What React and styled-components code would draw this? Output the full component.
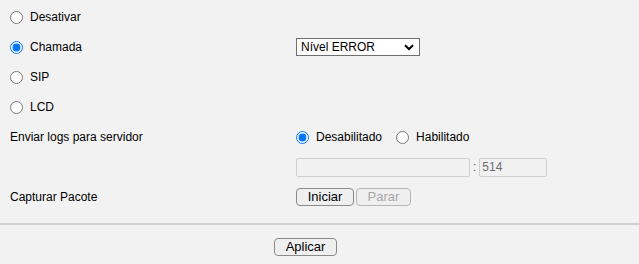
import React from "react";
import styled, { createGlobalStyle } from "styled-components";

const Global = createGlobalStyle`
  html, body { margin: 0; padding: 0; background: #f2f2f2; }
  body { font-family: "Liberation Sans", Arial, sans-serif; font-size: 12px; color: #000; }
`;

const Page = styled.div`
  width: 639px;
  padding-top: 2px;
`;

const Form = styled.div`
  display: grid;
  grid-template-columns: 286px 1fr;
  grid-auto-rows: 30px;
  padding-left: 10px;
`;

const Cell = styled.div`
  display: flex;
  align-items: center;
  gap: ${(p) => p.$gap || 0}px;
`;

const Radio = styled.input.attrs({ type: "radio" })`
  margin: 0;
  width: 13px;
  height: 13px;
  accent-color: #0075ff;
`;

const RadioLabel = styled.label`
  display: inline-flex;
  align-items: center;
  gap: 7px;
  margin-right: ${(p) => p.$mr || 0}px;
`;

const SelectWrap = styled.div`
  position: relative;
  width: 124px;
  height: 18px;
`;

const Select = styled.select`
  appearance: none;
  width: 124px;
  height: 18px;
  margin: 0;
  padding: 0 0 0 4px;
  border: 1px solid #6f6f6f;
  border-radius: 0;
  background: #fff;
  font-family: "Liberation Sans", Arial, sans-serif;
  font-size: 12px;
  color: #000;
`;

const Chevron = styled.svg`
  position: absolute;
  right: 6px;
  top: 6px;
  pointer-events: none;
`;

const TextInput = styled.input`
  box-sizing: border-box;
  width: ${(p) => p.$w}px;
  height: 19px;
  margin: 0;
  padding: 0 2px;
  border: 1px solid #cfcfcf;
  border-radius: 2px;
  background: #f1f1f1;
  font-family: "Liberation Sans", Arial, sans-serif;
  font-size: 12px;
  color: #6d6d6d;
`;

const Colon = styled.span`
  margin: 0 3px 0 3px;
  color: #555;
`;

const Button = styled.button`
  box-sizing: border-box;
  width: ${(p) => p.$w}px;
  height: 18px;
  margin: 0;
  padding: 0;
  border: 1px solid ${(p) => (p.disabled ? "#b5b5b5" : "#8a8a8a")};
  border-radius: 4px;
  background: #efefef;
  font-family: "Liberation Sans", Arial, sans-serif;
  font-size: 13px;
  line-height: 14px;
  color: ${(p) => (p.disabled ? "#a8a8a8" : "#000")};
`;

const Divider = styled.hr`
  margin: 11px 0 0 0;
  border: none;
  border-top: 2px solid #d0d0d0;
`;

const Footer = styled.div`
  display: flex;
  justify-content: center;
  padding: 13px 28px 0 0;
`;

export default function App() {
  return (
    <Page>
      <Global />
      <Form>
        <Cell>
          <RadioLabel><Radio name="lvl" />Desativar</RadioLabel>
        </Cell>
        <Cell />
        <Cell>
          <RadioLabel><Radio name="lvl" defaultChecked />Chamada</RadioLabel>
        </Cell>
        <Cell>
          <SelectWrap>
            <Select defaultValue="error">
              <option value="error">Nível ERROR</option>
            </Select>
            <Chevron width="10" height="7" viewBox="0 0 10 7">
              <path d="M1 1.2 L5 5 L9 1.2" fill="none" stroke="#000" strokeWidth="2" />
            </Chevron>
          </SelectWrap>
        </Cell>
        <Cell>
          <RadioLabel><Radio name="lvl" />SIP</RadioLabel>
        </Cell>
        <Cell />
        <Cell>
          <RadioLabel><Radio name="lvl" />LCD</RadioLabel>
        </Cell>
        <Cell />
        <Cell>Enviar logs para servidor</Cell>
        <Cell>
          <RadioLabel $mr={14}><Radio name="srv" defaultChecked />Desabilitado</RadioLabel>
          <RadioLabel><Radio name="srv" />Habilitado</RadioLabel>
        </Cell>
        <Cell />
        <Cell>
          <TextInput $w={174} disabled defaultValue="" />
          <Colon>:</Colon>
          <TextInput $w={68} disabled defaultValue="514" />
        </Cell>
        <Cell>Capturar Pacote</Cell>
        <Cell $gap={2}>
          <Button $w={58}>Iniciar</Button>
          <Button $w={55} disabled>Parar</Button>
        </Cell>
      </Form>
      <Divider />
      <Footer>
        <Button $w={63}>Aplicar</Button>
      </Footer>
    </Page>
  );
}
